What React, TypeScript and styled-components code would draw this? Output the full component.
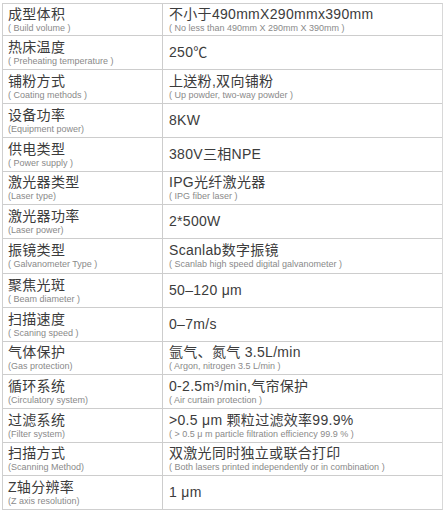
import styled, { createGlobalStyle } from "styled-components";

const GlobalStyle = createGlobalStyle`
  html, body {
    margin: 0;
    padding: 0;
    background: #fff;
  }
  body {
    font-family: "Liberation Sans", "Noto Sans CJK SC", sans-serif;
    color: #3a3a3a;
  }
`;

type Spec = {
  label: string;
  labelEn: string;
  value: string;
  valueEn?: string;
  h: number;
};

const specs: Spec[] = [
  { label: "成型体积", labelEn: "( Build volume )", value: "不小于490mmX290mmx390mm", valueEn: "( No less than 490mm X 290mm X 390mm )", h: 32 },
  { label: "热床温度", labelEn: "( Preheating temperature )", value: "250℃", h: 34 },
  { label: "铺粉方式", labelEn: "( Coating methods )", value: "上送粉,双向铺粉", valueEn: "( Up powder, two-way powder )", h: 34 },
  { label: "设备功率", labelEn: "(Equipment power)", value: "8KW", h: 34 },
  { label: "供电类型", labelEn: "( Power supply )", value: "380V三相NPE", h: 34 },
  { label: "激光器类型", labelEn: "(Laser type)", value: "IPG光纤激光器", valueEn: "( IPG fiber laser )", h: 33 },
  { label: "激光器功率", labelEn: "(Laser power)", value: "2*500W", h: 34 },
  { label: "振镜类型", labelEn: "( Galvanometer Type )", value: "Scanlab数字振镜", valueEn: "( Scanlab high speed digital galvanometer )", h: 35 },
  { label: "聚焦光斑", labelEn: "( Beam diameter )", value: "50–120 μm", h: 34 },
  { label: "扫描速度", labelEn: "( Scaning speed )", value: "0–7m/s", h: 34 },
  { label: "气体保护", labelEn: "(Gas protection)", value: "氩气、氮气 3.5L/min", valueEn: "( Argon, nitrogen 3.5 L/min )", h: 33 },
  { label: "循环系统", labelEn: "(Circulatory system)", value: "0-2.5m³/min,气帘保护", valueEn: "( Air curtain protection )", h: 34 },
  { label: "过滤系统", labelEn: "(Filter system)", value: ">0.5 μm 颗粒过滤效率99.9%", valueEn: "( > 0.5 μ m particle filtration efficiency 99.9 % )", h: 34 },
  { label: "扫描方式", labelEn: "(Scanning Method)", value: "双激光同时独立或联合打印", valueEn: "( Both  lasers printed independently or in combination )", h: 33 },
  { label: "Z轴分辨率", labelEn: "(Z axis resolution)", value: "1 μm", h: 33 },
];

const Page = styled.div`
  padding: 3px 0 0 2px;
`;

const Table = styled.div`
  width: 439px;
  border: 1px solid #cfcfcf;
  border-right-color: #d8d8d8;
  display: flex;
  flex-direction: column;
`;

const Row = styled.div<{ $h: number; $last?: boolean }>`
  display: grid;
  grid-template-columns: 160px 1fr;
  height: ${(p) => p.$h}px;
  box-sizing: border-box;
  border-bottom: ${(p) => (p.$last ? "none" : "1px solid #cdcdcd")};
`;

const Cell = styled.div<{ $right?: boolean }>`
  display: flex;
  flex-direction: column;
  justify-content: center;
  padding-left: ${(p) => (p.$right ? "6px" : "5px")};
  border-right: ${(p) => (p.$right ? "none" : "1px solid #cdcdcd")};
  white-space: nowrap;
  overflow: hidden;
`;

const Main = styled.div`
  font-size: 14px;
  line-height: 15px;
  letter-spacing: 0.3px;
  color: #3c3c3c;
`;

const Sub = styled.div`
  font-size: 9px;
  line-height: 9px;
  color: #8a8a8a;
  margin-top: 2px;
`;

export default function App() {
  return (
    <>
      <GlobalStyle />
      <Page>
        <Table>
          {specs.map((s, i) => (
            <Row key={s.label} $h={s.h} $last={i === specs.length - 1}>
              <Cell>
                <Main>{s.label}</Main>
                <Sub>{s.labelEn}</Sub>
              </Cell>
              <Cell $right>
                <Main>{s.value}</Main>
                {s.valueEn && <Sub>{s.valueEn}</Sub>}
              </Cell>
            </Row>
          ))}
        </Table>
      </Page>
    </>
  );
}
